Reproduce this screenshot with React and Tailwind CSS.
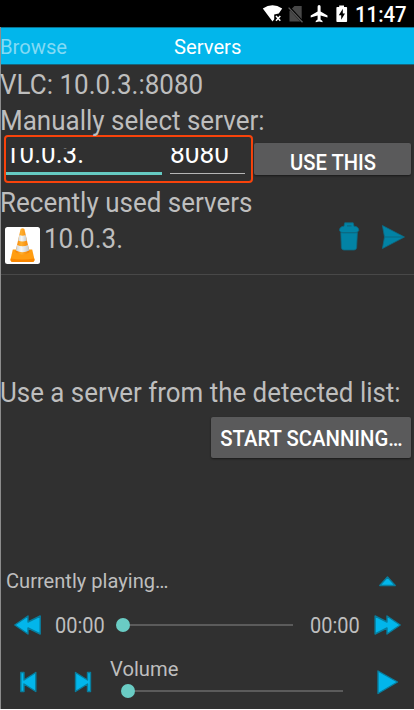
import React from "react";

function Label({ className = "", children }) {
  return <span className={"block origin-left whitespace-nowrap " + className}>{children}</span>;
}

function StatusBar() {
  return (
    <div className="flex h-[27px] shrink-0 items-center bg-black pl-[262px] text-white">
      <svg className="h-[27px] w-[90px] shrink-0" viewBox="262 0 90 27">
        <path d="M262.8 8.6Q272.5 1.8 282.2 8.6L278.8 13.6L274.2 14.5V19.2L272.5 21.6Z" fill="#fff" />
        <path d="M276 16l4.3 4.8M280.3 16l-4.3 4.8" stroke="#fff" strokeWidth="1.5" />
        <path d="M294.5 6h7.2v15.4h-12.2V11z" fill="#484848" />
        <path d="M288.2 6.4L303 22.4" stroke="#000" strokeWidth="2.6" />
        <path d="M288.6 7.6L302.5 22.2" stroke="#5b5b5b" strokeWidth="1.3" />
        <path d="M317.6 6.5a1.5 1.5 0 013 0V11.6L327.5 15.6V17.6L320.6 15.6V19.6L322.5 21V22.3L319.1 21.4L315.7 22.3V21L317.6 19.6V15.6L310.7 17.6V15.6L317.6 11.6Z" fill="#fff" />
        <path d="M337.2 6.9h2v-1.5h4.8v1.5h2.3q.8 0 .8.8v13.6q0 .8-.8.8h-9.1q-.8 0-.8-.8v-13.6q0-.8.8-.8z" fill="#fff" />
        <path d="M342.8 8.8l-4 6.4h2.4v4.6l3.8-6.4h-2.2z" fill="#000" />
      </svg>
      <Label className="mt-[3px] ml-[3px] scale-x-[.97] scale-y-[1.04] text-[21px] leading-[27px] font-medium">11:47</Label>
    </div>
  );
}

function Tabs() {
  return (
    <div className="flex h-[38px] shrink-0 border-t border-b border-t-[#087391] border-b-[#17647a] bg-[#02b6eb] text-[20px] leading-[38px]">
      <Label className="-ml-px w-[174px] scale-x-[1.01] scale-y-[1.05] text-[#82daf4]">Browse</Label>
      <Label className="scale-x-[1.01] scale-y-[1.05] text-white">Servers</Label>
    </div>
  );
}

function Cone() {
  return (
    <svg className="h-[37px] w-[35px]" viewBox="0 0 35 37">
      <defs>
        <linearGradient id="orange" x1="0" x2="1">
          <stop offset="0" stopColor="#f57c00" />
          <stop offset=".4" stopColor="#ffb02e" />
          <stop offset="1" stopColor="#f47f00" />
        </linearGradient>
        <linearGradient id="silver" x1="0" x2="1">
          <stop offset="0" stopColor="#cfd4d5" />
          <stop offset=".4" stopColor="#f5f7f7" />
          <stop offset="1" stopColor="#c3c8ca" />
        </linearGradient>
      </defs>
      <rect width="35" height="37" rx="2.5" fill="#fff" />
      <path d="M7.8 22.5H27.2L29.5 32.5Q29.5 35 27 35H8Q5.5 35 5.5 32.5Z" fill="#ff9d12" />
      <path d="M5.8 31.5Q17 33.5 29.2 31.5L29.5 33Q29.5 35 27 35H8Q5.5 35 5.5 33Z" fill="#f98600" />
      <path d="M15.6 2Q17.5 .3 19.4 2L24.5 25Q17.5 30.5 10.5 25Z" fill="url(#orange)" />
      <path d="M14.4 8Q17.5 9.5 20.6 8L21.9 13.5Q17.5 15.5 13.1 13.5Z" fill="url(#silver)" />
      <path d="M12.1 18Q17.5 20.5 23 18L24.2 23.5Q17.5 27 10.9 23.5Z" fill="url(#silver)" />
    </svg>
  );
}

function Slider({ className }) {
  return (
    <div className={"flex items-center " + className}>
      <span className="h-[14px] w-[14px] shrink-0 rounded-full bg-[#6accc4]" />
      <span className="h-[2px] flex-1 bg-[#5b5b5b]" />
    </div>
  );
}

function Icon({ d, className, viewBox }) {
  return (
    <svg className={"shrink-0 " + className} viewBox={viewBox}>
      <path d={d} fill="#02b6eb" stroke="#087d9d" strokeWidth="1.4" strokeLinejoin="round" />
    </svg>
  );
}

export default function App() {
  return (
    <div className="h-[710px] w-[414px] overflow-hidden bg-white font-['Roboto',sans-serif]">
      <div className="flex h-[709px] flex-col border-l border-[#8c8c8c] bg-[#303030] text-[#bebebe]">
        <div className="-ml-px"><StatusBar /></div>
        <Tabs />
        <Label className="mt-px -ml-px h-9 translate-y-[.5px] scale-y-[1.04] text-[26px] leading-9">VLC: 10.0.3.:8080</Label>
        <Label className="-ml-px h-[33px] translate-y-[.5px] scale-y-[1.04] text-[26px] leading-9">Manually select server:</Label>

        <div className="flex h-[48px] shrink-0 pl-[3px]">
          <div className="flex h-[48px] w-[249px] shrink-0 rounded-[4px] border-2 border-[#f8430b]">
            <div className="mt-[11px] h-[27px] w-[156px] overflow-hidden border-b-[3px] border-[#65cac2] text-white">
              <Label className="-mt-[12px] -ml-px scale-y-[1.04] text-[26px] leading-9">10.0.3.</Label>
            </div>
            <div className="mt-[11px] ml-[8px] h-[26px] w-[75px] overflow-hidden border-b border-[#b5b5b5] text-white">
              <Label className="-mt-[12px] scale-x-[1.01] scale-y-[1.04] text-[26px] leading-9">8080</Label>
            </div>
          </div>
          <button className="mt-[8px] ml-px flex h-[32px] w-[157px] shrink-0 justify-center overflow-hidden rounded-[2px] bg-[#5a5a5b] text-[20px] leading-[39px] font-medium text-white shadow-[0_1px_2px_#1a1a1a]">
            <Label className="origin-center scale-x-[1.01] scale-y-[1.06]">USE THIS</Label>
          </button>
        </div>

        <Label className="mt-px -ml-px h-9 translate-y-[.5px] scale-y-[1.04] text-[26px] leading-9">Recently used servers</Label>
        <div className="flex h-[55px] shrink-0 border-b border-[#484848] pl-[4px]">
          <div className="mt-[7px]"><Cone /></div>
          <Label className="ml-[4px] h-9 w-[294px] translate-y-[.5px] scale-y-[1.04] text-[26px] leading-9">10.0.3.</Label>
          <svg className="h-[54px] w-[76px]" viewBox="338 220 76 54">
            <g fill="#0283a5" stroke="#0b6a84" strokeWidth=".8" strokeLinejoin="round">
              <path d="M340.8 232.5H357.4L356.6 247.8Q356.3 250 354 250H344Q341.7 250 341.4 247.8Z" />
              <path d="M339.5 230.5Q339.5 226.5 344 226.3L344.7 222.8H353.2L354 226.3Q358.8 226.5 358.8 230.5Q358 232.6 355 232.6H343Q340.3 232.6 339.5 230.5Z" />
              <path d="M382.4 225.5L404.5 237L382.4 248.6L384.5 237Z" />
            </g>
            <path d="M347 225.8h4.5M341.3 232.6H357M384.5 237H403" stroke="#0b6a84" strokeWidth="1.2" />
          </svg>
        </div>

        <Label className="mt-[100px] -ml-px h-[42px] w-[404px] scale-x-[.996] scale-y-[1.03] text-[26px] leading-9">Use a server from the detected list:</Label>
        <div className="flex shrink-0 justify-end pr-[3px]">
          <button className="flex h-[41px] w-[200px] justify-center rounded-[2px] bg-[#5a5a5b] text-[20px] leading-[43px] font-medium text-white shadow-[0_1px_2px_#1a1a1a]">
            <Label className="origin-center translate-x-[-.7px] translate-y-[.5px] scale-x-[1.015] scale-y-[1.06]">START SCANNING…</Label>
          </button>
        </div>

        <div className="mt-[106px] flex h-8 shrink-0 items-center pl-[5px] text-[20px] leading-8">
          <Label className="w-[371px] translate-y-[.5px] scale-x-[1.005] scale-y-[1.05]">Currently playing…</Label>
          <Icon className="h-[14px] w-[20px]" viewBox="377 573 20 14" d="M379.8 585.5L387.5 577L395.2 585.5Z" />
        </div>
        <div className="mt-[13px] flex h-8 shrink-0 items-center pl-[12px] text-[20px] leading-8">
          <Icon className="h-[24px] w-[30px]" viewBox="13 613 30 24" d="M14.8 625L28 616V622L40.2 616V634L28 628V634Z" />
          <Label className="ml-[12px] w-[60px] translate-y-[.5px] scale-y-[1.06]">00:00</Label>
          <Slider className="ml-px w-[177px]" />
          <Label className="ml-[17px] w-[62px] translate-y-[.5px] scale-y-[1.06]">00:00</Label>
          <Icon className="h-[24px] w-[30px]" viewBox="372.5 613 30 24" d="M400.7 625L387.5 616V622L375.6 616V634L387.5 628V634Z" />
        </div>
        <div className="mt-[9px] flex h-[58px] shrink-0 pl-[15px]">
          <Icon className="h-[58px] w-[24px]" viewBox="16 650 24 58" d="M20.8 672.5H24V680L35.8 672.5V691.5L24 684V691.5H20.8Z" />
          <Icon className="ml-[32px] h-[58px] w-[24px]" viewBox="72 650 24 58" d="M90.5 672.5H87.5V680L75.5 672.5V691.5L87.5 684V691.5H90.5Z" />
          <div className="ml-[14px] w-[262px]">
            <Label className="mt-[2px] h-[32px] translate-y-[.5px] scale-x-[1.01] scale-y-[1.05] text-[20px] leading-8">Volume</Label>
            <Slider className="ml-[11px] w-[222px]" />
          </div>
          <Icon className="h-[58px] w-[28px]" viewBox="372 650 28 58" d="M378 671L397.5 682L378 693.5Z" />
        </div>
      </div>
    </div>
  );
}
